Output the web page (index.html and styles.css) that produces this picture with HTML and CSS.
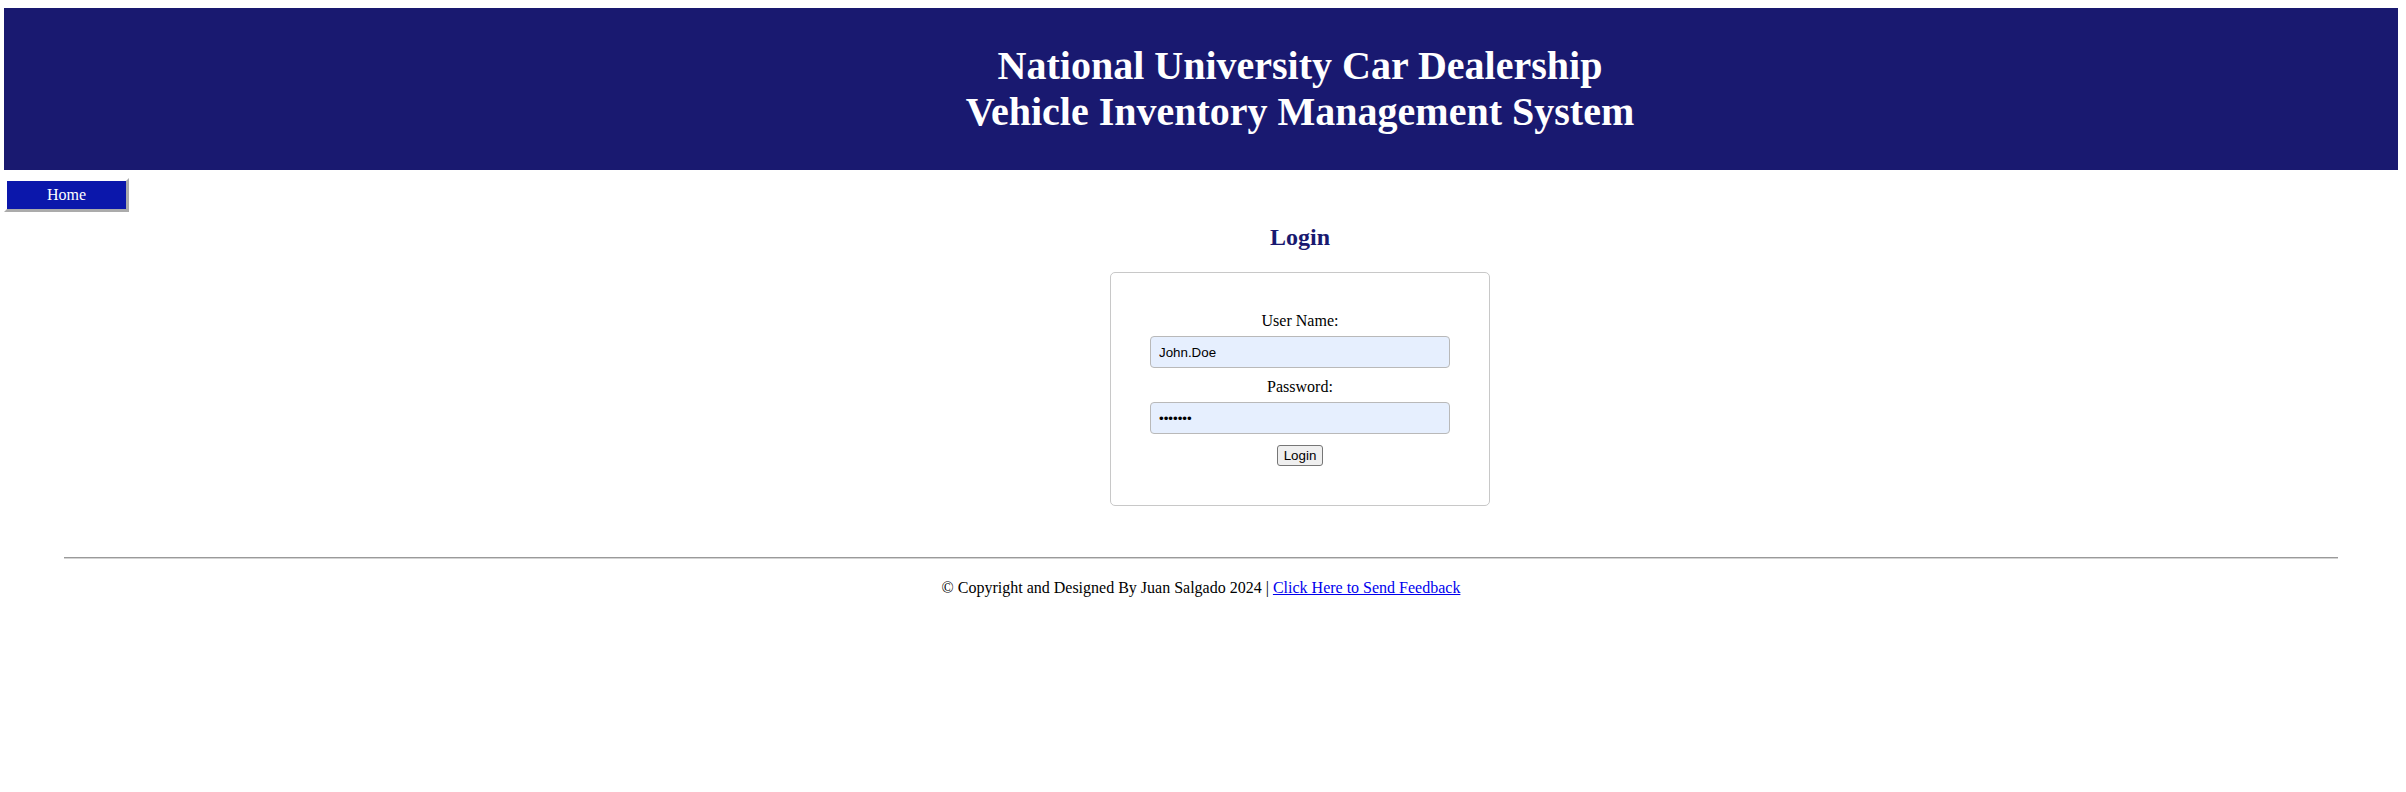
FILE: index.html
```html
<!DOCTYPE html>
<html lang="en">
<head>
<meta charset="utf-8">
<title>Login - Vehicle Inventory Management System</title>
<link rel="stylesheet" href="styles.css">
</head>
<body>
<header class="site-header">
  <h1 class="site-title">National University Car Dealership<br>Vehicle Inventory Management System</h1>
</header>
<div class="layout">
  <nav class="side-nav">
    <a class="nav-btn" href="#">Home</a>
  </nav>
  <main class="main">
    <h2 class="page-title">Login</h2>
    <form class="login-box">
      <label class="field-label" for="user">User Name:</label>
      <input class="field-input" id="user" type="text" value="John.Doe">
      <label class="field-label second" for="pass">Password:</label>
      <input class="field-input" id="pass" type="password" value="1234567">
      <button class="login-btn" type="button">Login</button>
    </form>
  </main>
</div>
<footer class="site-footer">
  <hr class="footer-rule">
  <p class="footer-text">© Copyright and Designed By Juan Salgado 2024 | <a href="#" class="footer-link">Click Here to Send Feedback</a></p>
</footer>
</body>
</html>
```

FILE: styles.css
```css
body {
  margin: 8px 8px 8px 4px;
  font-family: "Liberation Serif", "Times New Roman", serif;
  font-size: 16px;
  color: #000;
  background: #fff;
}

.site-header {
  background: #191970;
  color: #fff;
  padding: 0 0 0 198px;
}

.site-title {
  margin: 0;
  padding: 35px 0;
  font-size: 40px;
  line-height: 46px;
  font-weight: bold;
  text-align: center;
}

.layout {
  display: grid;
  grid-template-columns: 198px 1fr;
  margin-top: 8px;
}

.side-nav {
  display: flex;
  flex-direction: column;
  align-items: flex-start;
}

.nav-btn {
  display: block;
  width: 119px;
  padding: 5px 0;
  line-height: 18px;
  background: #0b17ab;
  border: 3px outset #fff;
  color: #fff;
  text-align: center;
  text-decoration: none;
}

.main {
  text-align: center;
}

.page-title {
  margin: 45px 0 21px;
  font-size: 24px;
  line-height: 28px;
  color: #191970;
}

.login-box {
  width: 300px;
  margin: 0 auto;
  padding: 39px;
  border: 1px solid #c8c8c8;
  border-radius: 5px;
  display: flex;
  flex-direction: column;
  align-items: center;
}

.field-label {
  display: block;
  line-height: 18px;
  margin-bottom: 6px;
}

.field-label.second {
  margin-top: 10px;
}

.field-input {
  box-sizing: border-box;
  width: 300px;
  height: 32px;
  margin: 0;
  padding: 0 8px;
  border: 1px solid #b9b9b9;
  border-radius: 4px;
  background: #e6effe;
  font-family: "Liberation Sans", Arial, sans-serif;
  font-size: 13.33px;
  color: #000;
}

.login-btn {
  margin-top: 11px;
  height: 21px;
  padding: 1px 6px;
  border: 1px solid #767676;
  border-radius: 3px;
  background: #efefef;
  font-family: "Liberation Sans", Arial, sans-serif;
  font-size: 13.33px;
  color: #000;
}

.site-footer {
  text-align: center;
}

.footer-rule {
  width: 95%;
  height: 0;
  margin: 51px auto 0;
  border: 0;
  border-top: 1px solid #9a9a9a;
  border-bottom: 1px solid #d4d4d4;
}

.footer-text {
  margin: 20px 0;
  line-height: 18px;
}

.footer-link {
  color: #0000ee;
}
```
